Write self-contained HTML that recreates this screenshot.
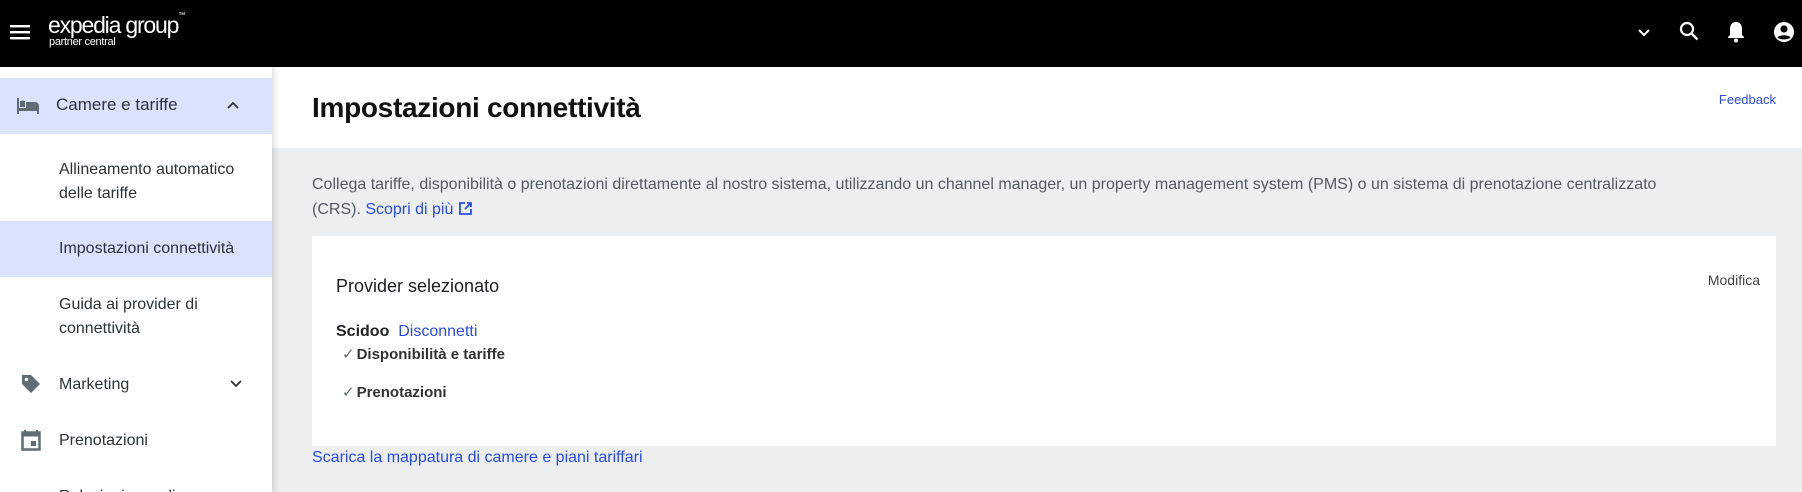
<!DOCTYPE html>
<html><head><meta charset="utf-8"><style>
*{box-sizing:border-box;margin:0;padding:0}
body{width:1802px;height:492px;overflow:hidden;font-family:"Liberation Sans",sans-serif;background:#eceef0;position:relative;color:#1f2428}
.hdr{position:absolute;left:0;top:0;width:1802px;height:67px;background:#000}
.side{position:absolute;left:0;top:67px;width:272px;height:425px;background:#fff;box-shadow:2px 0 6px rgba(0,0,0,.15);z-index:2;overflow:hidden}
.row{position:absolute;left:0;width:272px;font-size:16px;color:#2e3338}
.hl{background:#dbe2fd}
.main-top{position:absolute;left:272px;top:67px;width:1530px;height:81px;background:#fff}
.a{color:#2a4bf0}
.abs{position:absolute;white-space:nowrap}
</style></head><body>
<div class="hdr">
 <svg class="abs" style="left:10px;top:24px" width="20" height="16"><rect y="1" width="20" height="2.4" fill="#fff"/><rect y="7" width="20" height="2.4" fill="#fff"/><rect y="13" width="20" height="2.4" fill="#fff"/></svg>
 <div class="abs" style="left:48px;top:12px;color:#fff;font-size:23px;letter-spacing:-1.2px">expedia group<span style="font-size:7px;vertical-align:top">™</span></div>
 <div class="abs" style="left:49px;top:36px;color:#fff;font-size:11px;letter-spacing:-0.3px">partner central</div>
 <svg class="abs" style="left:1637px;top:26px" width="14" height="14"><path d="M2 4l5 5 5-5" stroke="#fff" stroke-width="2" fill="none"/></svg>
 <svg class="abs" style="left:1678px;top:20px" width="22" height="22"><circle cx="9" cy="9" r="6" stroke="#fff" stroke-width="2.2" fill="none"/><path d="M13.5 13.5l6 6" stroke="#fff" stroke-width="2.4"/></svg>
 <svg class="abs" style="left:1726px;top:20px" width="20" height="24"><path d="M10 2c-4 0-6 3-6 7v6l-2 2v1h16v-1l-2-2V9c0-4-2-7-6-7z" fill="#fff"/><circle cx="10" cy="20.5" r="2" fill="#fff"/></svg>
 <svg class="abs" style="left:1772px;top:20px" width="24" height="24"><circle cx="12" cy="12" r="10" fill="#fff"/><circle cx="12" cy="9" r="3.6" fill="#000"/><path d="M5.5 17.5c2-3 11-3 13 0c-2 2.5-11 2.5-13 0z" fill="#000"/></svg>
</div>
<div class="side">
 <div class="row hl" style="top:11px;height:56px"><svg class="abs" style="left:16px;top:18px" width="24" height="20"><path d="M1 2h2v10h20v6h-2v-3H3v3H1z M4 5h5v6H4z M10 6h9a4 4 0 0 1 4 4v2H10z" fill="#5e6d73"/><circle cx="6.5" cy="7" r="2.5" fill="#5e6d73"/></svg><span class="abs" style="left:56px;top:17px;font-size:17px">Camere e tariffe</span><svg class="abs" style="left:226px;top:22px" width="14" height="10"><path d="M2 8l5-5 5 5" stroke="#333" stroke-width="1.8" fill="none"/></svg></div>
 <div class="row" style="top:91px;line-height:24px;padding-left:59px">Allineamento automatico<br>delle tariffe</div>
 <div class="row hl" style="top:154px;height:56px;padding-left:59px;line-height:56px">Impostazioni connettività</div>
 <div class="row" style="top:226px;line-height:24px;padding-left:59px">Guida ai provider di<br>connettività</div>
 <div class="row" style="top:306px;line-height:24px;padding-left:59px">Marketing</div>
 <svg class="abs" style="left:20px;top:306px" width="22" height="22"><path d="M2 2h9l9 9-9 9-9-9z" fill="#5e6d73"/><circle cx="6.5" cy="6.5" r="1.8" fill="#fff"/></svg>
 <svg class="abs" style="left:229px;top:312px" width="14" height="10"><path d="M2 2l5 5 5-5" stroke="#333" stroke-width="1.8" fill="none"/></svg>
 <div class="row" style="top:362px;line-height:24px;padding-left:59px">Prenotazioni</div>
 <svg class="abs" style="left:21px;top:362px" width="20" height="22"><path d="M4 1v3M16 1v3" stroke="#5e6d73" stroke-width="2"/><rect x="1.5" y="3.5" width="17" height="17" fill="none" stroke="#5e6d73" stroke-width="2.5"/><rect x="1.5" y="3.5" width="17" height="4" fill="#5e6d73"/><rect x="10" y="12" width="5" height="5" fill="#5e6d73"/></svg>
 <div class="row" style="top:418px;line-height:24px;padding-left:59px">Relazioni con gli</div>
</div>
<div class="main-top">
 <div class="abs" style="left:40px;top:25px;font-size:28px;font-weight:bold;color:#111;letter-spacing:-0.3px">Impostazioni connettività</div>
 <div class="abs a" style="right:26px;top:25px;font-size:13px">Feedback</div>
</div>
<div class="abs" style="left:312px;top:172px;font-size:16px;line-height:25px;color:#555b61;white-space:normal;width:1400px">Collega tariffe, disponibilità o prenotazioni direttamente al nostro sistema, utilizzando un channel manager, un property management system (PMS) o un sistema di prenotazione centralizzato<br>(CRS). <span class="a">Scopri di più</span> <svg width="15" height="15" style="vertical-align:-2px"><path d="M7 2H2v11h11V8" stroke="#2a4bf0" stroke-width="1.8" fill="none"/><path d="M9 2h4v4M13 2L7 8" stroke="#2a4bf0" stroke-width="1.8" fill="none"/></svg></div>
<div class="abs" style="left:312px;top:236px;width:1464px;height:210px;background:#fff">
 <div class="abs" style="left:24px;top:40px;font-size:18px;color:#1a1d21">Provider selezionato</div>
 <div class="abs" style="right:16px;top:36px;font-size:14px;color:#444">Modifica</div>
 <div class="abs" style="left:24px;top:87px;font-size:16px"><b>Scidoo</b>&nbsp;&nbsp;<span class="a">Disconnetti</span></div>
 <div class="abs" style="left:30px;top:109px;font-size:15px;font-weight:bold;color:#333"><span style="color:#5e6d73;font-weight:normal;margin-right:2px">✓</span>Disponibilità e tariffe</div>
 <div class="abs" style="left:30px;top:147px;font-size:15px;font-weight:bold;color:#333"><span style="color:#5e6d73;font-weight:normal;margin-right:2px">✓</span>Prenotazioni</div>
</div>
<div class="abs a" style="left:312px;top:449px;font-size:16px">Scarica la mappatura di camere e piani tariffari</div>
</body></html>
